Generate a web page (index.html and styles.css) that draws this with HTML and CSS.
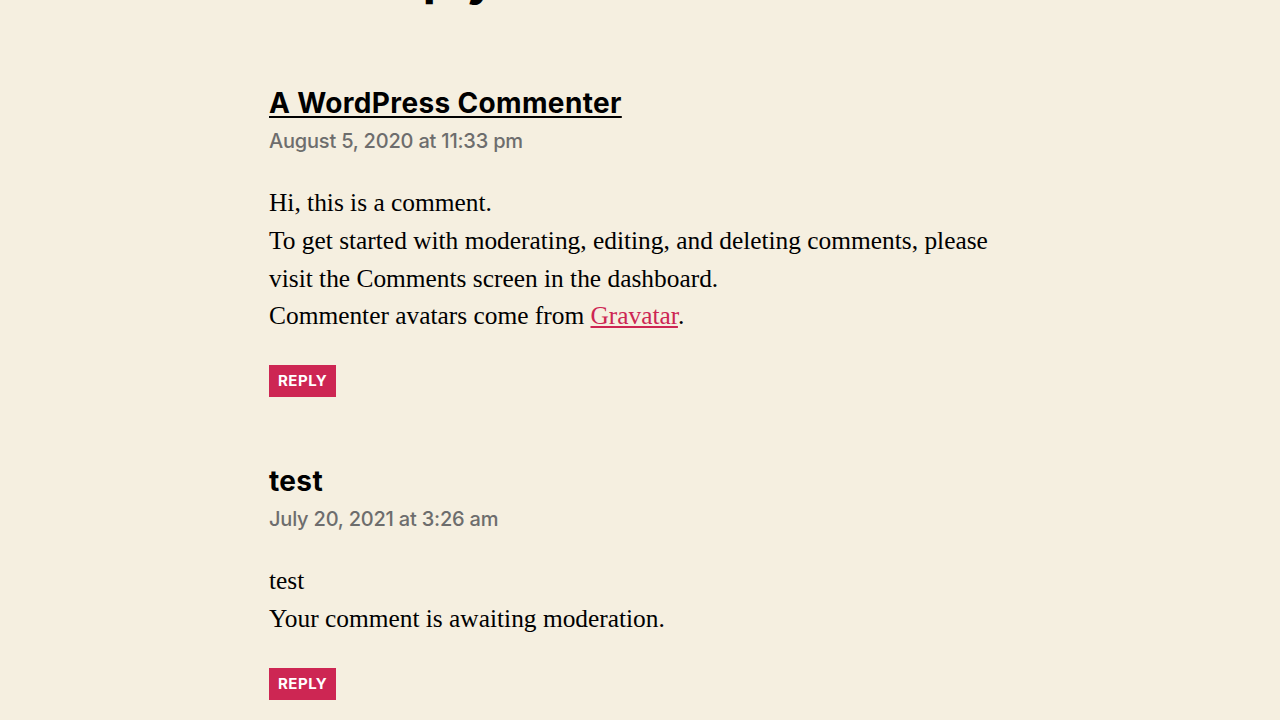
FILE: index.html
```html
<!DOCTYPE html>
<html lang="en">
<head>
  <meta charset="UTF-8" />
  <meta name="viewport" content="width=device-width, initial-scale=1.0">
  <title>Hello world! – Comments</title>
  <link rel="stylesheet" href="styles.css">
</head>
<body>
  <div class="comments-wrapper">
    <!-- Judul komentar (terpotong di atas layar) -->
    <div class="comments-header">
      <h2 class="comment-reply-title">One reply on “Hello world!”</h2>
    </div>

    <div class="comments-list">
      <article class="comment">
        <header class="comment-meta">
          <div class="comment-author"><a href="#" class="url">A WordPress Commenter</a></div>
          <div class="comment-metadata"><time>August 5, 2020 at 11:33 pm</time></div>
        </header>
        <div class="comment-content">
          <p>Hi, this is a comment.<br>
          To get started with moderating, editing, and deleting comments, please visit the Comments screen in the dashboard.<br>
          Commenter avatars come from <a href="#">Gravatar</a>.</p>
        </div>
        <footer class="comment-footer-meta">
          <a href="#" class="comment-reply-link">Reply</a>
        </footer>
      </article>

      <article class="comment">
        <header class="comment-meta">
          <div class="comment-author"><span class="fn">test</span></div>
          <div class="comment-metadata"><time>July 20, 2021 at 3:26 am</time></div>
        </header>
        <div class="comment-content">
          <p>test</p>
          <p class="comment-awaiting-moderation">Your comment is awaiting moderation.</p>
        </div>
        <footer class="comment-footer-meta">
          <a href="#" class="comment-reply-link">Reply</a>
        </footer>
      </article>
    </div>
  </div>
</body>
</html>
```

FILE: styles.css
```css
* {
  box-sizing: border-box;
}

html, body {
  margin: 0;
  padding: 0;
  background-color: #f5efe0;
  color: #000;
  font-family: Inter, "Noto Sans", sans-serif;
}

body {
  overflow: hidden;
}

.comments-wrapper {
  width: 742px;
  margin: 0 auto;
}

.comments-header {
  margin-top: -52px;
}

.comment-reply-title {
  margin: 0;
  font-size: 48px;
  font-weight: 700;
  line-height: 1.25;
}

.comments-list {
  display: flex;
  flex-direction: column;
  gap: 67px;
  margin-top: 78px;
}

.comment {
  display: flex;
  flex-direction: column;
}

.comment-meta {
  display: flex;
  flex-direction: column;
  gap: 7px;
}

.comment-author {
  font-size: 28px;
  font-weight: 700;
  line-height: 35px;
  letter-spacing: 0.35px;
}

.comment-author a {
  color: #000;
  text-decoration: underline;
  text-decoration-thickness: 2px;
  text-underline-offset: 3px;
}

.comment-metadata {
  font-size: 20px;
  font-weight: 500;
  line-height: 26px;
  color: #6d6d6d;
  letter-spacing: -0.2px;
}

.comment-content {
  margin-top: 30px;
  font-family: "Liberation Serif", "Times New Roman", serif;
  font-size: 25.4px;
  line-height: 37.8px;
}

.comment-content p {
  margin: 0;
}

.comment-content a {
  color: #cd2653;
  text-underline-offset: 2px;
}

.comment-footer-meta {
  margin-top: 30px;
  display: flex;
}

.comment-reply-link {
  display: block;
  height: 32px;
  padding: 0 9px;
  line-height: 32px;
  background-color: #cd2653;
  color: #fff;
  font-size: 15px;
  font-weight: 700;
  text-transform: uppercase;
  text-decoration: none;
  letter-spacing: 0.0333em;
}
```
